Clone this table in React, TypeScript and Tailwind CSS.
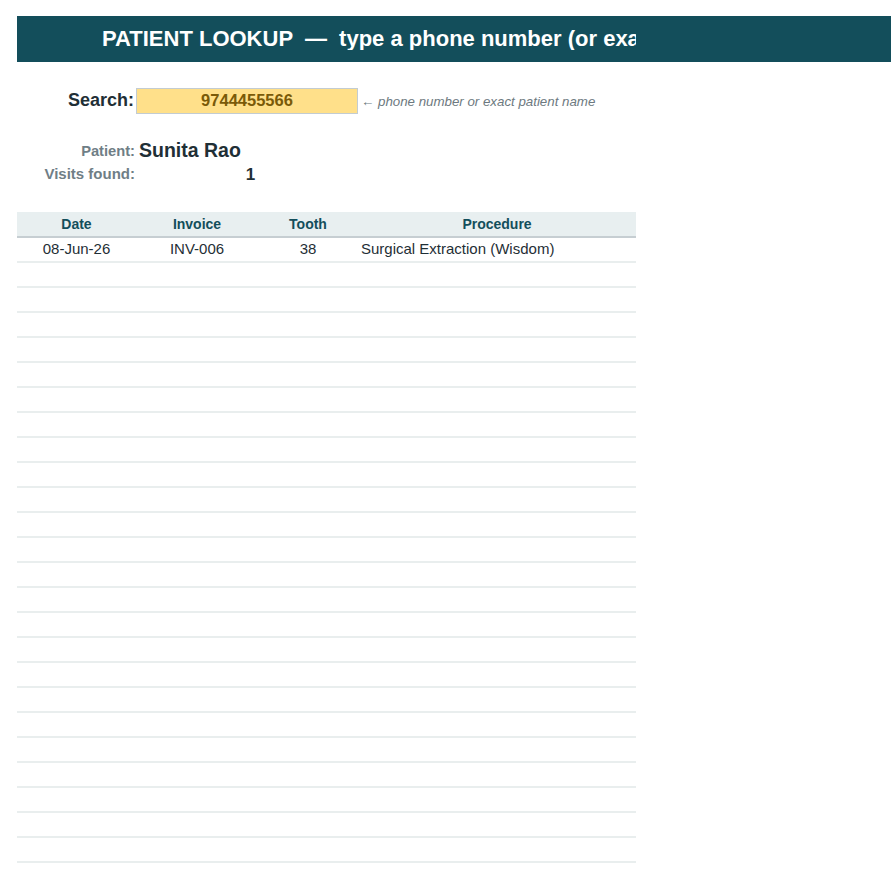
import React from "react";

const COLS = "grid grid-cols-[119px_122px_100px_278px]";

export default function App() {
  const emptyRows = Array.from({ length: 24 }, (_, i) => i);
  return (
    <div
      className="w-[892px] h-[879px] bg-white pt-[16px] pl-[17px]"
      style={{ fontFamily: '"Liberation Sans", Arial, sans-serif' }}
    >
      {/* Title bar */}
      <div className="w-[874px] h-[46px] bg-[#134e5b] flex items-center">
        <div className="w-[619px] overflow-hidden whitespace-pre pl-[85px] text-[22px] font-bold text-white leading-none">
          PATIENT LOOKUP  —  type a phone number (or exact patient name)
        </div>
      </div>

      {/* Search row */}
      <div className={`${COLS} mt-[25px] h-[26px] items-center`}>
        <div className="text-right pr-[2px] text-[18px] font-bold text-[#1f2f36]">Search:</div>
        <div className="col-span-2 h-[26px] border border-[#c3ccd1] bg-[#ffe08a] flex items-center justify-center text-[16.5px] font-bold text-[#7a5a08]">
          9744455566
        </div>
        <div className="pl-[3px] pt-[3px] text-[13.3px] italic text-[#6d7980] whitespace-nowrap">
          ← phone number or exact patient name
        </div>
      </div>

      {/* Patient info */}
      <div className={`${COLS} mt-[23px] h-[25px] items-center`}>
        <div className="text-right pr-[1px] text-[14.7px] font-bold text-[#6f7e86]">Patient:</div>
        <div className="col-span-2 pl-[3px] text-[19.5px] font-bold text-[#1f2f36] whitespace-nowrap">
          Sunita Rao
        </div>
        <div />
      </div>
      <div className={`${COLS} h-[25px] items-center`}>
        <div className="text-right pr-[1px] text-[15px] font-bold text-[#6f7e86] whitespace-nowrap">Visits found:</div>
        <div className="col-span-2 text-center pl-[7px] pt-[1px] text-[17px] font-bold text-[#1f2f36]">1</div>
        <div />
      </div>

      {/* Table */}
      <div className="mt-[26px] w-[619px]">
        <div className={`${COLS} h-[26px] bg-[#e8eff0] border-b-2 border-[#c6ced2] items-center text-[14px] font-bold text-[#134e5b] text-center`}>
          <div>Date</div>
          <div>Invoice</div>
          <div>Tooth</div>
          <div>Procedure</div>
        </div>
        <div className={`${COLS} h-[25px] border-b-2 border-[#e9eeee] items-center text-[15px] text-[#1f2f36]`}>
          <div className="text-center">08-Jun-26</div>
          <div className="text-center">INV-006</div>
          <div className="text-center">38</div>
          <div className="pl-[3px] whitespace-nowrap">Surgical Extraction (Wisdom)</div>
        </div>
        {emptyRows.map((i) => (
          <div key={i} className="h-[25px] border-b-2 border-[#e9eeee]" />
        ))}
      </div>
    </div>
  );
}
